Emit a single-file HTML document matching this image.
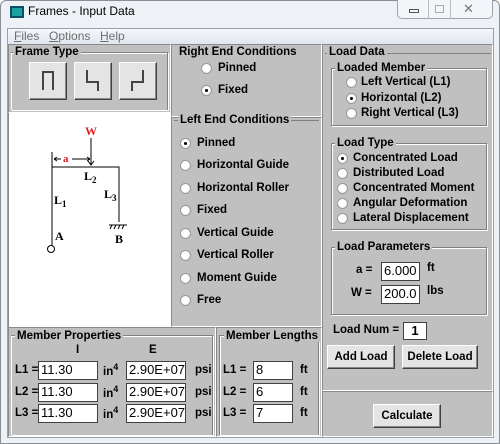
<!DOCTYPE html>
<html><head><meta charset="utf-8"><style>
*{margin:0;padding:0;box-sizing:border-box}
body{width:500px;height:444px;background:#fff;position:relative;overflow:hidden;font-family:"Liberation Sans",Arial,sans-serif;font-size:11.5px;font-weight:bold;color:#000}
.a{position:absolute}
.frame{left:0;top:0;width:500px;height:444px;background:#eef1f5;border:1px solid #8a8f96;border-radius:6px 6px 0 0}
.client{left:7px;top:28px;width:487px;height:410px;background:#c0c0c0;border:1px solid #9aa0a8}
.menu{left:8px;top:29px;width:485px;height:15px;background:linear-gradient(#f6f8fb,#dfe6ef);font-weight:normal;color:#6d6d6d;font-size:12px}
.menu span{position:absolute;top:0}
.panel{background:#c0c0c0;border:1px solid #8a8a8a;border-right-color:#fff;border-bottom-color:#fff}
.gb{border:1px solid #808080;box-shadow:1px 1px 0 #fff inset,1px 1px 0 #fff}
.gt{background:#c0c0c0;padding:0 2px;line-height:12px}
.r{width:11px;height:11px;border-radius:50%;background:radial-gradient(circle at 40% 40%,#fff 50%,#ddd);border:1px solid #999}
.r.on::after{content:"";position:absolute;left:3px;top:3px;width:3px;height:3px;border-radius:50%;background:#000}
.btn{background:#e4e4e4;border:1px solid #fff;border-right-color:#404040;border-bottom-color:#404040;box-shadow:inset -1px -1px 0 #888;text-align:center}
.in{background:#fff;border:1px solid #404040;font-weight:normal;font-size:13px;padding-left:2px;line-height:16px;height:19px}
</style></head><body>
<div class="a frame"></div>
<div class="a" style="left:10px;top:6px;width:14px;height:12px;background:#1aa3a0;border:2px solid #0b4f6a"></div>
<div class="a" style="left:28px;top:4px;font-weight:normal;font-size:12px;color:#000">Frames - Input Data</div>
<div class="a" style="left:397px;top:0;width:96px;height:19px;border:1px solid #9ba3ad;border-top:none;border-radius:0 0 5px 5px;background:#f3f5f8"></div>
<div class="a" style="left:428px;top:0;width:1px;height:19px;background:#b5bcc5"></div>
<div class="a" style="left:450px;top:0;width:1px;height:19px;background:#b5bcc5"></div>
<div class="a" style="left:409px;top:9px;width:10px;height:4px;border:1px solid #555"></div>
<div class="a" style="left:435px;top:5px;width:9px;height:8px;border:1px solid #aaa"></div>
<div class="a" style="left:463px;top:1px;font-size:13px;color:#777;font-weight:normal">✕</div>
<div class="a client"></div>
<div class="a menu"><span style="left:6px"><u>F</u>iles</span><span style="left:41px"><u>O</u>ptions</span><span style="left:92px"><u>H</u>elp</span></div>

<!-- Frame type -->
<div class="a panel" style="left:8px;top:44px;width:163px;height:69px"></div>
<div class="a gb" style="left:11px;top:52px;width:157px;height:58px;border-bottom:none;border-left:none"></div>
<div class="a gt" style="left:13px;top:46px">Frame Type</div>
<div class="a btn" style="left:29px;top:62px;width:38px;height:38px"></div>
<div class="a btn" style="left:74px;top:62px;width:38px;height:38px"></div>
<div class="a btn" style="left:119px;top:62px;width:38px;height:38px"></div>
<svg class="a" style="left:0;top:0" width="170" height="110"><g stroke="#444" stroke-width="2" fill="none">
<path d="M43 90V72H53V90"/>
<path d="M87 70V82H98V91"/>
<path d="M143 70V82H132V91"/>
</g></svg>

<!-- diagram -->
<div class="a" style="left:8px;top:113px;width:163px;height:214px;background:#fff;border-left:1px solid #888"></div>
<svg class="a" style="left:0;top:110px" width="170" height="220">
<g stroke="#000" fill="none" stroke-width="1">
<path d="M52 57V135M52 57H119V112M52 42V57M91 28V55"/>
<path d="M88 51l3 4 3-4"/>
<path d="M54 49H61M72 49H90M54 49l3-2M54 49l3 2M90 49l-3-2M90 49l-3 2"/>
<circle cx="51" cy="139" r="3.5"/>
<path d="M109 115H127M110 119l2-4M114 119l2-4M118 119l2-4M122 119l2-4"/>
</g>
<g font-family="Liberation Serif,serif" font-weight="bold" font-size="12">
<text x="85" y="25" fill="#d22">W</text>
<text x="63" y="52" fill="#d22" font-size="11">a</text>
<text x="84" y="70">L<tspan font-size="9" dy="3">2</tspan></text>
<text x="54" y="94">L<tspan font-size="9" dy="3">1</tspan></text>
<text x="104" y="88">L<tspan font-size="9" dy="3">3</tspan></text>
<text x="55" y="130">A</text>
<text x="115" y="133">B</text>
</g></svg>

<!-- Right End -->
<div class="a panel" style="left:171px;top:44px;width:151px;height:73px"></div>
<div class="a gt" style="left:177px;top:46px">Right End Conditions</div>
<div class="a r" style="left:201px;top:63px"></div><div class="a" style="left:218px;top:62px">Pinned</div>
<div class="a r on" style="left:201px;top:85px"></div><div class="a" style="left:218px;top:84px">Fixed</div>

<!-- Left End -->
<div class="a panel" style="left:171px;top:117px;width:151px;height:210px"></div>
<div class="a" style="left:174px;top:120px;width:145px;height:1px;background:#808080"></div>
<div class="a gt" style="left:178px;top:114px">Left End Conditions</div>
<div class="a r on" style="left:180px;top:138px"></div><div class="a" style="left:197px;top:137px">Pinned</div>
<div class="a r" style="left:180px;top:160px"></div><div class="a" style="left:197px;top:159px">Horizontal Guide</div>
<div class="a r" style="left:180px;top:183px"></div><div class="a" style="left:197px;top:182px">Horizontal Roller</div>
<div class="a r" style="left:180px;top:205px"></div><div class="a" style="left:197px;top:204px">Fixed</div>
<div class="a r" style="left:180px;top:228px"></div><div class="a" style="left:197px;top:227px">Vertical Guide</div>
<div class="a r" style="left:180px;top:250px"></div><div class="a" style="left:197px;top:249px">Vertical Roller</div>
<div class="a r" style="left:180px;top:273px"></div><div class="a" style="left:197px;top:272px">Moment Guide</div>
<div class="a r" style="left:180px;top:295px"></div><div class="a" style="left:197px;top:294px">Free</div>

<!-- Load Data -->
<div class="a panel" style="left:322px;top:44px;width:171px;height:347px"></div>
<div class="a" style="left:325px;top:53px;width:166px;height:1px;background:#808080"></div>
<div class="a gt" style="left:327px;top:46px">Load Data</div>
<div class="a gb" style="left:331px;top:68px;width:156px;height:58px"></div>
<div class="a gt" style="left:335px;top:62px">Loaded Member</div>
<div class="a r" style="left:346px;top:77px"></div><div class="a" style="left:361px;top:76px">Left Vertical (L1)</div>
<div class="a r on" style="left:346px;top:93px"></div><div class="a" style="left:361px;top:92px">Horizontal (L2)</div>
<div class="a r" style="left:346px;top:108px"></div><div class="a" style="left:361px;top:107px">Right Vertical (L3)</div>

<div class="a gb" style="left:331px;top:143px;width:156px;height:87px"></div>
<div class="a gt" style="left:335px;top:137px">Load Type</div>
<div class="a r on" style="left:337px;top:153px"></div><div class="a" style="left:353px;top:152px">Concentrated Load</div>
<div class="a r" style="left:337px;top:168px"></div><div class="a" style="left:353px;top:167px">Distributed Load</div>
<div class="a r" style="left:337px;top:183px"></div><div class="a" style="left:353px;top:182px">Concentrated Moment</div>
<div class="a r" style="left:337px;top:198px"></div><div class="a" style="left:353px;top:197px">Angular Deformation</div>
<div class="a r" style="left:337px;top:213px"></div><div class="a" style="left:353px;top:212px">Lateral Displacement</div>

<div class="a gb" style="left:331px;top:247px;width:156px;height:68px"></div>
<div class="a gt" style="left:335px;top:241px">Load Parameters</div>
<div class="a" style="left:356px;top:264px">a =</div><div class="a in" style="left:381px;top:262px;width:39px">6.000</div><div class="a" style="left:427px;top:262px">ft</div>
<div class="a" style="left:351px;top:287px">W =</div><div class="a in" style="left:381px;top:285px;width:39px">200.0</div><div class="a" style="left:427px;top:285px">lbs</div>
<div class="a" style="left:333px;top:324px">Load Num =</div><div class="a in" style="left:403px;top:322px;width:24px;height:18px;text-align:center;font-weight:bold;padding:0">1</div>
<div class="a btn" style="left:327px;top:345px;width:68px;height:24px;line-height:22px">Add Load</div>
<div class="a btn" style="left:402px;top:345px;width:76px;height:24px;line-height:22px">Delete Load</div>

<!-- Calculate -->
<div class="a panel" style="left:322px;top:391px;width:171px;height:46px"></div>
<div class="a btn" style="left:373px;top:404px;width:68px;height:24px;line-height:22px">Calculate</div>

<!-- Member properties -->
<div class="a panel" style="left:8px;top:327px;width:208px;height:110px"></div>
<div class="a gb" style="left:11px;top:335px;width:202px;height:100px;border-bottom:none;border-left:none"></div>
<div class="a gt" style="left:15px;top:330px">Member Properties</div>
<div class="a" style="left:76px;top:344px">I</div><div class="a" style="left:149px;top:344px">E</div>
<div class="a" style="left:15px;top:364px">L1 =</div><div class="a in" style="left:38px;top:361px;width:60px">11.30</div><div class="a" style="left:103px;top:362px">in<sup style="font-size:9px">4</sup></div><div class="a in" style="left:126px;top:361px;width:60px">2.90E+07</div><div class="a" style="left:195px;top:364px">psi</div>
<div class="a" style="left:15px;top:386px">L2 =</div><div class="a in" style="left:38px;top:383px;width:60px">11.30</div><div class="a" style="left:103px;top:384px">in<sup style="font-size:9px">4</sup></div><div class="a in" style="left:126px;top:383px;width:60px">2.90E+07</div><div class="a" style="left:195px;top:386px">psi</div>
<div class="a" style="left:15px;top:407px">L3 =</div><div class="a in" style="left:38px;top:404px;width:60px">11.30</div><div class="a" style="left:103px;top:405px">in<sup style="font-size:9px">4</sup></div><div class="a in" style="left:126px;top:404px;width:60px">2.90E+07</div><div class="a" style="left:195px;top:407px">psi</div>

<div class="a panel" style="left:216px;top:327px;width:106px;height:110px"></div>
<div class="a gb" style="left:219px;top:335px;width:100px;height:100px;border-bottom:none"></div>
<div class="a gt" style="left:224px;top:330px">Member Lengths</div>
<div class="a" style="left:223px;top:364px">L1 =</div><div class="a in" style="left:253px;top:361px;width:40px">8</div><div class="a" style="left:300px;top:364px">ft</div>
<div class="a" style="left:223px;top:386px">L2 =</div><div class="a in" style="left:253px;top:383px;width:40px">6</div><div class="a" style="left:300px;top:386px">ft</div>
<div class="a" style="left:223px;top:407px">L3 =</div><div class="a in" style="left:253px;top:404px;width:40px">7</div><div class="a" style="left:300px;top:407px">ft</div>
</body></html>
